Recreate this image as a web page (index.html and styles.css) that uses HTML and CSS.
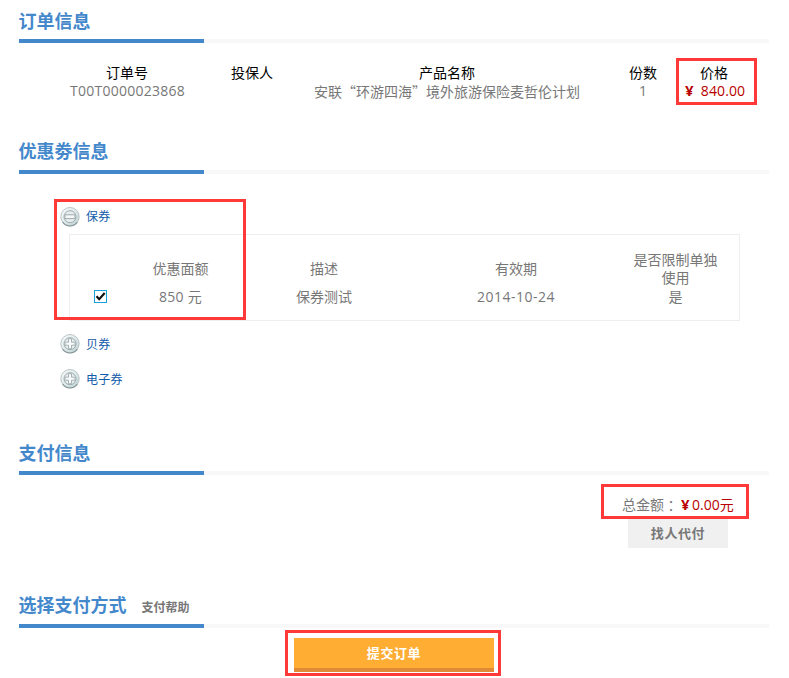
FILE: index.html
```html
<!DOCTYPE html>
<html lang="zh-CN">
<head>
<meta charset="utf-8">
<title>订单信息</title>
<link rel="stylesheet" href="styles.css">
</head>
<body>
<svg class="defs" width="0" height="0">
  <defs>
    <linearGradient id="disc" x1="0" y1="0" x2="1" y2="1">
      <stop offset="0" stop-color="#fbfcfc"/>
      <stop offset="0.55" stop-color="#dbe8ea"/>
      <stop offset="1" stop-color="#b9cdd1"/>
    </linearGradient>
    <symbol id="base" viewBox="0 0 20 20">
      <circle cx="10" cy="9.7" r="9.2" fill="url(#disc)" stroke="#b4bec0" stroke-width=".9"/>
      <path d="M2.6 15.2A9.2 9.2 0 0 0 17.4 15.2" fill="none" stroke="#8b999b" stroke-width="1.1"/>
      <circle cx="10" cy="9.7" r="6" fill="#e6edef" stroke="#a2abad" stroke-width="1"/>
    </symbol>
  </defs>
</svg>
<main class="page">
  <section class="section order">
    <h2 class="title">订单信息</h2>
    <div class="order-table">
      <div class="col"><b>订单号</b><span class="serial">T00T0000023868</span></div>
      <div class="col"><b>投保人</b></div>
      <div class="col"><b>产品名称</b><span class="product">安联“环游四海”境外旅游保险麦哲伦计划</span></div>
      <div class="col"><b>份数</b><span>1</span></div>
      <div class="col"><b>价格</b><span class="price"><i class="yen">¥</i>840.00</span></div>
    </div>
  </section>

  <section class="section coupons">
    <h2 class="title">优惠劵信息</h2>
    <div class="coupon-list">
      <a class="toggle"><svg width="20" height="20" viewBox="0 0 20 20"><use href="#base"/><path d="M5 7.8h10v3.8h-10z" fill="#f5f9fa" stroke="#a2abad"/></svg>保券</a>
      <div class="coupon-table">
        <div class="cell"></div>
        <div class="cell">优惠面额</div>
        <div class="cell">描述</div>
        <div class="cell">有效期</div>
        <div class="cell">是否限制单独<br>使用</div>
        <div class="cell"><span class="check"><svg width="11" height="11" viewBox="0 0 11 11"><path d="M1.5 5.2L4.2 8.2L9.7 2" fill="none" stroke="#111" stroke-width="2.2"/></svg></span></div>
        <div class="cell face">850 元</div>
        <div class="cell">保券测试</div>
        <div class="cell date">2014-10-24</div>
        <div class="cell">是</div>
      </div>
      <a class="toggle"><svg width="20" height="20" viewBox="0 0 20 20"><use href="#base"/><path d="M8.5 4.7h3v3.5h3.5v3h-3.5v3.5h-3v-3.5h-3.500v-3h3.500z" fill="#f8fbfb" stroke="#a2abad" stroke-width=".9"/></svg><span>贝券</span></a>
      <a class="toggle"><svg width="20" height="20" viewBox="0 0 20 20"><use href="#base"/><path d="M8.5 4.7h3v3.5h3.5v3h-3.5v3.5h-3v-3.5h-3.500v-3h3.500z" fill="#f8fbfb" stroke="#a2abad" stroke-width=".9"/></svg><span>电子券</span></a>
    </div>
  </section>

  <section class="section payment">
    <h2 class="title">支付信息</h2>
    <div class="total"><span>总金额</span><span class="colon">：</span><span class="amount"><i class="yen">¥</i>0.00元</span></div>
    <button class="delegate">找人代付</button>
  </section>

  <section class="section method">
    <h2 class="title">选择支付方式<small>支付帮助</small></h2>
    <button class="submit">提交订单</button>
  </section>

  <div class="mark mark-price"></div>
  <div class="mark mark-coupon"></div>
  <div class="mark mark-total"></div>
  <div class="mark mark-submit"></div>
</main>
</body>
</html>
```

FILE: styles.css
```css
* { box-sizing: border-box; }
body {
  margin: 0;
  background: #fff;
  color: #777;
  font: 14px/18px "Open Sans", "Noto Sans CJK SC", sans-serif;
}
.defs { position: absolute; }
.page { position: relative; width: 789px; height: 678px; padding-left: 19px; overflow: hidden; }
.section { width: 750px; }
.order { height: 131px; }
.coupons { height: 301px; }
.payment { height: 153px; }
.title {
  margin: 0;
  height: 43px;
  line-height: 41px;
  font-size: 18px;
  font-weight: 700;
  color: #4488cc;
  text-indent: -.5px;
  background:
    linear-gradient(#4488cc, #4488cc) left bottom / 185px 4px no-repeat,
    linear-gradient(#f8f8f8, #f8f8f8) left bottom / 100% 4px no-repeat;
}
.order .title, .payment .title { line-height: 42px; }
.coupons .title, .method .title { line-height: 40px; }
.title small { margin-left: 15px; font-size: 12px; color: #777; }

.order-table {
  display: grid;
  grid-template-columns: 180px 70px 320px 72px 70px;
  padding: 21px 0 0 18px;
  text-align: center;
  white-space: nowrap;
}
.col { display: flex; flex-direction: column; align-items: center; }
.col b { font-weight: 400; color: #000; }
.serial { padding-left: 1px; letter-spacing: .25px; }
.product { font-family: "Noto Sans CJK SC", sans-serif; }
.price, .amount { color: #b80000; }
.yen { display: inline-block; width: 9px; font-size: 15px; line-height: 16px; font-style: normal; font-weight: 700; }
.price .yen { margin-right: 7px; }
.price { padding-left: 2px; letter-spacing: .1px; }

.coupon-list { display: flex; flex-direction: column; align-items: flex-start; padding: 33px 0 0 41px; }
.toggle { display: flex; align-items: center; gap: 6px; height: 20px; font-size: 12px; letter-spacing: .3px; color: #115caa; }
.toggle span { padding-top: 2px; }
.toggle + .toggle { margin-top: 15px; }
.coupon-table {
  display: grid;
  grid-template-columns: 60px 101px 186px 198px 121px;
  grid-template-rows: 36px 20px;
  align-items: center;
  width: 671px;
  height: 87px;
  margin: 7px 0 13px 9px;
  padding-top: 16px;
  border: 1px solid #eee;
  text-align: center;
}
.face { letter-spacing: .3px; }
.date { letter-spacing: .5px; }
.check { display: block; width: 13px; height: 13px; margin: 0 auto; border: 1px solid #1a9fdc; background: #fff; transform: translateY(-1px); }
.check svg { display: block; }

.total { display: flex; padding: 21px 0 0 603px; white-space: nowrap; }
.colon { width: 14px; font-family: "Noto Sans CJK TC", sans-serif; }
.amount { padding-left: 3px; }
.amount .yen { margin-right: 2px; }
button { display: block; border: 0; padding: 0; font: 700 13px/18px "Noto Sans CJK SC", sans-serif; }
.delegate { width: 100px; height: 29px; margin: 5px 0 0 609px; padding-bottom: 2px; background: #f0f0f0; color: #777; letter-spacing: .6px; }
.submit {
  width: 200px; height: 34px; margin: 10px 0 0 275px;
  background: #ffad33; border-bottom: 4px solid #e08a38; color: #fff; letter-spacing: .6px;
}

.mark { position: absolute; border: 3px solid #ff3838; }
.mark-price { left: 676px; top: 58px; width: 81px; height: 47px; }
.mark-coupon { left: 54px; top: 199px; width: 192px; height: 121px; }
.mark-total { left: 601px; top: 484px; width: 148px; height: 35px; }
.mark-submit { left: 285px; top: 630px; width: 216px; height: 46px; }
```
